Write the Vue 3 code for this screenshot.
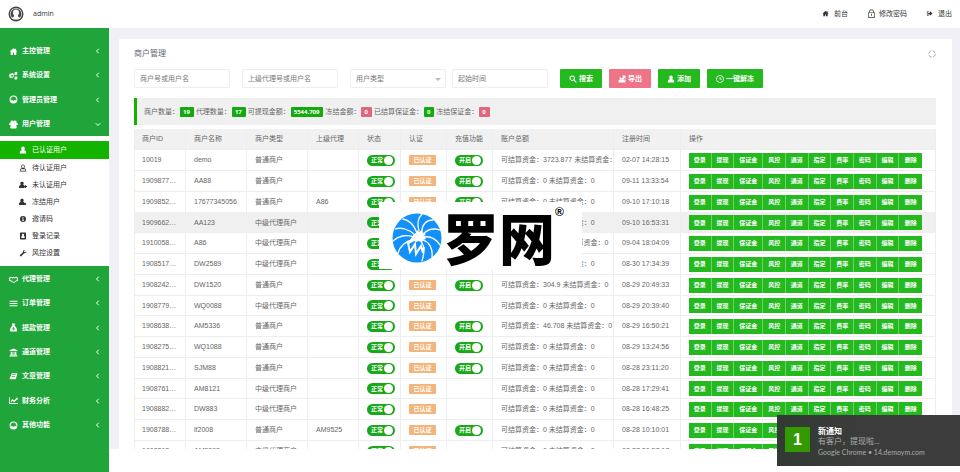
<script setup>
import { h } from 'vue'

const icons = {
  home: 'M8 2 1 8h2v6h4v-4h2v4h4V8h2L12.500 5.800V3h-2v1.100z',
  cogs: 'M5.500 3.500l1 .2.4 1.300 1.300-.3.800 1.300-1 1 .1 1 1.200.8-.5 1.400-1.500-.1-.7.800.2 1.500-1.500.5-.9-1.200-1 0-1 1.100-1.400-.7.4-1.400-.6-.8-1.300-.2V8l1.400-.4.4-1-.7-1.200 1.200-1.100 1.200.8 1-.4zM5.500 7a1.700 1.700 0 1 0 0 3.400 1.700 1.700 0 0 0 0-3.400zM12.500 1l1 1.200 1.500-.1v1.500l-1 .9 1 1-.4 1.300-1.500-.2-.9 1-1.200-1-1.500.1V5.200l1-.8-.9-1.200.8-1.100 1.300.3zM12.500 9l1 1.200 1.500-.1v1.500l-1 .9 1 1-.4 1.300-1.500-.2-.9 1-1.200-1-1.500.1v-1.500l1-.8-.9-1.200.8-1.100 1.300.3z',
  circle: 'M8 1a7 7 0 1 0 0 14A7 7 0 0 0 8 1zm0 1.800a5.200 5.200 0 0 1 4.700 7.400c-.6-.7-1.400-1-2.200-1.100A3.400 3.400 0 0 0 8 3.800a3.400 3.400 0 0 0-2.500 5.300c-.8.1-1.600.4-2.200 1.100A5.200 5.200 0 0 1 8 2.800zM8 4.200a2.900 2.900 0 1 1 0 5.800 2.900 2.900 0 0 1 0-5.800z',
  users: 'M5 1a2.400 2.400 0 0 1 3 1.500A2.400 2.400 0 0 1 11 1a2.500 2.500 0 0 1 2 3.500c2 .3 2.800 1.500 2.800 4.500h-3c.6 1 .8 2.500.8 5-1 1.300-10.200 1.300-11.200 0 0-2.500.2-4 .8-5h-3C.2 6 1 4.800 3 4.500A2.500 2.500 0 0 1 5 1z',
  user: 'M8 1c2.200 0 3.500 1.600 3.500 4 0 1.400-.5 2.600-1.300 3.400C13.500 9 14.500 11 14.500 15h-13c0-4 1-6 4.300-6.600C5 7.600 4.500 6.400 4.500 5c0-2.400 1.300-4 3.500-4z',
  userOutline: 'M8 1c2.200 0 3.500 1.600 3.500 4 0 1.400-.5 2.600-1.300 3.400C13.500 9 14.500 11 14.500 15h-13c0-4 1-6 4.300-6.600C5 7.600 4.500 6.400 4.500 5c0-2.400 1.300-4 3.500-4zm0 1.400C6.600 2.400 6 3.400 6 5c0 1.800 1 3 2 3s2-1.200 2-3c0-1.600-.6-2.600-2-2.600zM3 13.600h10c-.2-2.300-1.100-3.400-3-3.700-1.200.7-2.800.7-4 0-1.900.3-2.800 1.400-3 3.700z',
  userPlus: 'M6 1.500A3 3.300 0 0 1 7.800 7.700C10 8 11 9 11 10h1V8.500h2V10h2v2h-2v2h-2v-2h-1v2H0c0-4 1-5.900 4.200-6.300A3 3.300 0 0 1 6 1.500z',
  userTimes: 'M6 1.500A3 3.300 0 0 1 7.800 7.700c1.500.2 2.400.8 2.900 1.700L12 10.700l1.400-1.400 1.300 1.300-1.400 1.400 1.400 1.400-1.300 1.300-1.400-1.400L10.700 14H0c0-4 1-5.900 4.200-6.300A3 3.300 0 0 1 6 1.500z',
  info: 'M8 2a6 6 0 1 0 0 12A6 6 0 0 0 8 2zM7 4h2v2H7zm0 3h2v4h1v1H6v-1h1V8H6V7z',
  book: 'M3 1h10l1 1v12l-1 1H3l-1-1V2zm5 2.500a2.300 2.300 0 0 0-1.500 4C5 8 4.500 9.500 4.500 12h7c0-2.500-.5-4-2-4.500a2.300 2.300 0 0 0-1.500-4z',
  wrench: 'M14.500 4.500c.4 2.500-1.600 4.600-4.200 4.100L4.500 14.500c-1.500 1-3.500-1-2.500-2.500l6-5.600C7.400 3.500 9.600 1.300 12.300 2L9.900 4.300l.5 1.700 1.700.5z',
  handshake: 'M0 5l3-2 3 1 2-1 2 1 3-1 3 2v5l-3 1-4 3-3-1-3-2-3-1zm2 1v3l2 .5 3 2.300 2 .6 3-2.500 2-.7V6l-1.500-1L10 6 8 5 6 7.500 4.500 8 6.500 5.600 3.500 5z',
  list: 'M1 3h14v2H1zm0 4h14v2H1zm0 4h14v2H1z',
  bag: 'M5 1h6L9.800 4.500C13 7 15 11 14 15H2C1 11 3 7 6.200 4.500zM6.500 7l1 2H6v1h1.500v1H6v1h1.500v1.500h1V12H10v-1H8.500v-1H10V9H8.500l1-2h-1L8 8l-.5-1z',
  bank: 'M8 1l7 3v1.500H1V4zM3 6.500h2V12h1.200V6.500h1.300V12h1V6.500h1.300V12H11V6.500h2V12h1.500v1H1.500v-1H3zM1 13.500h14V15H1z',
  copy: 'M5 2h10l-3 11H3c-2 0-2-1-1.700-2zM6 4l-.4 1.400h6L12 4zM5 7l-.4 1.400h6L11 7z',
  chart: 'M0 2h1.500v10.500H16V14H0zm3 7l3.500-3.500 2.500 2.500L13 4l-1.200-1H15.500v4l-1.200-1L9 11 6.500 8.500 4 11z',
  search: 'M6.500 1a5.500 5.500 0 0 1 4.600 8.500L15.500 14 14 15.500l-4.500-4.400A5.500 5.500 0 1 1 6.500 1zm0 2a3.500 3.500 0 1 0 0 7 3.500 3.500 0 0 0 0-7z',
  share: 'M8 1h7v7l-2-2-3.500 3.500-2.500-2.500L10.500 3.500zM4.500 4L8 7.500 6 9h9v6H1V11l3-2C2.500 7 3 5 4.500 4z',
  clock: 'M8 .5a7.500 7.500 0 1 0 0 15 7.500 7.500 0 0 0 0-15zM8 2a6 6 0 1 1 0 12A6 6 0 0 1 8 2zM7.300 4v5H12V7.500H8.800V4z',
  lock: 'M2 6h2V4c0-4 8-4 8 0v2h2v9.500H2zm1.200 1.200v7h9.600v-7zM5.200 6h5.600V4c0-2.400-5.600-2.400-5.600 0zM7.300 8.500h1.400v3.500H7.300z',
  exit: 'M6 3v1.800H3.500v6.400H6V13H3.500L2 11.500v-7L3.500 3zm3 0l6 5-6 5v-3H5V6h4z',
}

const Icon = (props) =>
  h('svg', { viewBox: '0 0 16 16', 'aria-hidden': 'true' }, [
    h('path', { d: icons[props.name], fill: 'currentColor', 'fill-rule': 'evenodd' }),
  ])
Icon.props = ['name']

const topMenu = [
  { icon: 'home', label: '主控管理' },
  { icon: 'cogs', label: '系统设置' },
  { icon: 'circle', label: '管理员管理' },
  { icon: 'users', label: '用户管理', open: true },
]
const subMenu = [
  { icon: 'user', label: '已认证用户', active: true },
  { icon: 'userOutline', label: '待认证用户' },
  { icon: 'userPlus', label: '未认证用户' },
  { icon: 'userTimes', label: '冻结用户' },
  { icon: 'info', label: '邀请码' },
  { icon: 'book', label: '登录记录' },
  { icon: 'wrench', label: '风控设置' },
]
const bottomMenu = [
  { icon: 'handshake', label: '代理管理' },
  { icon: 'list', label: '订单管理' },
  { icon: 'bag', label: '提款管理' },
  { icon: 'bank', label: '通道管理' },
  { icon: 'copy', label: '文章管理' },
  { icon: 'chart', label: '财务分析' },
  { icon: 'circle', label: '其他功能' },
]
const stats = [
  { label: '商户数量：', value: '19' },
  { label: '代理数量：', value: '17' },
  { label: '可提现金额：', value: '5544.709' },
  { label: '冻结金额：', value: '0', red: true },
  { label: '已结算保证金：', value: '0' },
  { label: '冻结保证金：', value: '0', red: true },
]
const heads = ['商户ID', '商户名称', '商户类型', '上级代理', '状态', '认证', '充值功能', '账户总额', '注册时间', '操作']
const ops = ['登录', '提现', '保证金', '风控', '通道', '指定', '费率', '密码', '编辑', '删除']
const N = '普通商户'
const M = '中级代理商户'
const rows = [
  ['10019', 'demo', N, '', '3723.877', '02-07 14:28:15'],
  ['1909877345', 'AA88', N, '', '0', '09-11 13:33:54'],
  ['1909852345', '17677345056', N, 'A86', '0', '09-10 17:10:18'],
  ['1909662345', 'AA123', M, '', '0', '09-10 16:53:31'],
  ['1910058345', 'A86', M, '', '10.05', '09-04 18:04:09'],
  ['1908517345', 'DW2589', M, '', '0', '08-30 17:34:39'],
  ['1908242345', 'DW1520', N, '', '304.9', '08-29 20:49:33'],
  ['1908779345', 'WQ0088', M, '', '0', '08-29 20:39:40'],
  ['1908638345', 'AM5336', N, '', '46.708', '08-29 16:50:21'],
  ['1908275345', 'WQ1088', N, '', '0', '08-29 13:24:56'],
  ['1908821345', 'SJM88', N, '', '0', '08-28 23:11:20'],
  ['1908761345', 'AM8121', M, '', '0', '08-28 17:29:41'],
  ['1908882345', 'DW883', M, '', '0', '08-28 16:48:25'],
  ['1908788345', 'lf2008', N, 'AM9525', '0', '08-28 10:10:01'],
  ['1908818345', 'AM5565', M, '', '0', '08-27 20:57:17'],
]
</script>

<template>
  <div class="page">
    <header class="topbar">
      <svg class="avatar" viewBox="0 0 16 16" aria-hidden="true">
        <circle cx="8" cy="8" r="7.500" fill="#484848" />
        <circle cx="8" cy="8" r="6" fill="#fff" />
        <path fill="#484848" fill-rule="evenodd" d="M8 2.600a5.400 5.400 0 1 0 0 10.800A5.400 5.400 0 0 0 8 2.600zM8 3.500c2.200 0 3.200 1.500 3 3.500-.1 1.200-.6 2.100-1.200 2.700.1 1.100.6 1.200 2.200 1.900-2 2-6 2-8 0 1.600-.7 2.100-.8 2.200-1.900C5.600 9.100 5.100 8.200 5 7c-.2-2 .8-3.500 3-3.500z" />
      </svg>
      <span class="name">admin</span>
      <nav class="links">
        <a href="#"><Icon name="home" />前台</a>
        <a href="#" class="pwd"><Icon name="lock" />修改密码</a>
        <a href="#"><Icon name="exit" />退出</a>
      </nav>
    </header>

    <div class="body">
      <nav class="side">
        <ul class="group first">
          <li v-for="m in topMenu" :key="m.label">
            <a href="#"><Icon :name="m.icon" /><span>{{ m.label }}</span>
              <svg class="arrow" viewBox="0 0 8 8" aria-hidden="true"><path :d="m.open ? 'M1 3l3 3 3-3' : 'M5 1L2 4l3 3'" fill="none" stroke="currentColor" stroke-width="1.300" /></svg>
            </a>
          </li>
        </ul>
        <ul class="sub">
          <li v-for="m in subMenu" :key="m.label">
            <a href="#" :class="{ active: m.active }"><Icon :name="m.icon" /><span>{{ m.label }}</span></a>
          </li>
        </ul>
        <ul class="group last">
          <li v-for="m in bottomMenu" :key="m.label">
            <a href="#"><Icon :name="m.icon" /><span>{{ m.label }}</span>
              <svg class="arrow" viewBox="0 0 8 8" aria-hidden="true"><path d="M5 1L2 4l3 3" fill="none" stroke="currentColor" stroke-width="1.300" /></svg>
            </a>
          </li>
        </ul>
      </nav>

      <main class="main">
        <section class="card">
          <div class="title">
            <h1>商户管理</h1>
            <button class="refresh" aria-label="刷新">
              <svg viewBox="0 0 16 16"><circle cx="8" cy="8" r="6.500" fill="none" stroke="#999" stroke-width="1.500" stroke-dasharray="8 2.200" /></svg>
            </button>
          </div>

          <form class="filters" @submit.prevent>
            <input type="text" placeholder="商户号或用户名" aria-label="商户号或用户名" />
            <input type="text" placeholder="上级代理号或用户名" aria-label="上级代理号或用户名" />
            <div class="pair">
              <div class="pick">
                <select aria-label="用户类型"><option>用户类型</option></select>
              </div>
              <input type="text" placeholder="起始时间" aria-label="起始时间" />
            </div>
            <div class="btns">
              <button class="btn"><Icon name="search" />搜索</button>
              <button class="btn red" type="button"><Icon name="share" />导出</button>
              <button class="btn" type="button"><Icon name="user" />添加</button>
              <button class="btn" type="button"><Icon name="clock" />一键解冻</button>
            </div>
          </form>

          <div class="stats">
            <template v-for="s in stats" :key="s.label">{{ s.label }}<b :class="{ red: s.red }">{{ s.value }}</b></template>
          </div>

          <table>
            <colgroup>
              <col class="c-id" /><col class="c-name" /><col class="c-name" /><col class="c-up" /><col class="c-state" />
              <col class="c-auth" /><col class="c-auth" /><col class="c-sum" /><col class="c-time" /><col />
            </colgroup>
            <thead>
              <tr><th v-for="t in heads" :key="t">{{ t }}</th></tr>
            </thead>
            <tbody>
              <tr v-for="(r, i) in rows" :key="r[0]" :class="{ hover: i === 3 }">
                <td>{{ r[0] }}</td>
                <td>{{ r[1] }}</td>
                <td>{{ r[2] }}</td>
                <td>{{ r[3] }}</td>
                <td><label class="switch"><input type="checkbox" checked /><span>正常</span></label></td>
                <td><span class="tag">已认证</span></td>
                <td><label v-if="r[2] === N" class="switch"><input type="checkbox" checked /><span>开启</span></label></td>
                <td class="sum">可结算资金：{{ r[4] }} 未结算资金：0</td>
                <td>{{ r[5] }}</td>
                <td><div class="ops"><button v-for="o in ops" :key="o">{{ o }}</button></div></td>
              </tr>
            </tbody>
          </table>
        </section>
      </main>
    </div>

    <div class="brand">
      <svg viewBox="0 0 50 50" aria-hidden="true">
        <circle cx="25" cy="25" r="24.500" fill="#1490fb" />
        <g fill="none" stroke="#fff" stroke-width="1.300" stroke-linecap="round">
          <path d="M25 20C22 12 17 7 11 6" />
          <path d="M27 18C25 11 26 5 30 1" />
          <path d="M30 18c0-6 4-11 11-11" />
          <path d="M31 21c5-5 11-6 17-4" />
          <path d="M32 24c6-1 12 2 16 8" />
          <path d="M31 27c6 2 10 8 9 17" />
          <path d="M29 28c4 6 3 14 1 20" />
          <path d="M23 22C17 16 9 14 3 16" />
          <path d="M22 24C14 21 6 23 1 28" />
          <path d="M20 27C14 28 8 33 6 40" />
        </g>
        <path fill="#fff" d="M22 21l2-1 1-3 2 2 3-2 1 3 3 1-2 2 2 3-3 1-1 3-3-2-3 1-3-2-3 0 2-3z" />
        <path fill="none" stroke="#fff" stroke-width="2" stroke-linejoin="miter" d="M24 26l-8 4 2 9 5-8 1 10 5-8 2 7 1-6" />
      </svg>
      <span class="word">罗网</span><sup>®</sup>
    </div>

    <aside class="toast">
      <div class="num">1</div>
      <div>
        <strong>新通知</strong>
        <p>有客户，提现啦...</p>
        <small>Google Chrome • 14.demoym.com</small>
      </div>
    </aside>
  </div>
</template>

<style>
body {
  margin: 0;
  background: #fff;
}
</style>

<style scoped>
* {
  box-sizing: border-box;
}
.page {
  position: relative;
  display: flex;
  flex-direction: column;
  height: 100vh;
  overflow: hidden;
  font: 7px/10px "Liberation Sans", "Noto Sans CJK SC", sans-serif;
  color: #666;
}
a {
  color: inherit;
  text-decoration: none;
}
ul {
  list-style: none;
  margin: 0;
  padding: 0;
}
button,
input,
select {
  font: inherit;
  margin: 0;
}
svg {
  display: block;
  flex: none;
}
.topbar {
  display: flex;
  align-items: center;
  height: 28px;
  padding: 0 8px 1px;
  flex: none;
  color: #333;
}
.avatar {
  width: 16px;
  height: 16px;
}
.name {
  margin-left: 9px;
  font-family: "Open Sans", sans-serif;
}
.links {
  display: flex;
  gap: 19px;
  margin-left: auto;
}
.links a {
  display: flex;
  align-items: center;
  gap: 5px;
}
.links svg {
  width: 7px;
  height: 7px;
}
.links .pwd {
  gap: 3px;
}
.links .pwd svg {
  width: 9px;
  height: 9px;
}
.body {
  display: flex;
  flex: 1;
  min-height: 0;
}
.side {
  display: flex;
  flex-direction: column;
  width: 109px;
  flex: none;
}
.group {
  background: #20a53a;
  color: #fff;
  font-weight: 700;
}
.first {
  padding: 11px 0 0;
}
.last {
  flex: 1;
  padding-top: 1px;
}
.group a {
  display: flex;
  align-items: center;
  gap: 4px;
  height: 24px;
  padding: 0 8px 0 9px;
}
.group li:nth-child(3n) a {
  height: 25px;
}
.group a svg {
  width: 9px;
  height: 9px;
}
.group a .arrow {
  width: 6px;
  height: 6px;
  margin-left: auto;
}
.sub {
  padding: 5px 0 5px;
  color: #333;
}
.sub a {
  display: flex;
  align-items: center;
  gap: 5px;
  height: 17px;
  padding-left: 19px;
}
.sub svg {
  width: 8px;
  height: 8px;
}
.sub .active {
  height: 18px;
  background: #13b300;
  color: #fff;
}
.main {
  display: flex;
  flex: 1;
  min-width: 0;
  margin-bottom: 23px;
  padding: 11px 8px 0 10px;
  background: #f0f0f6;
}
.card {
  flex: 1;
  min-width: 0;
  padding: 9px 16px 0 15px;
  overflow: hidden;
  background: #fff;
}
.title {
  display: flex;
  align-items: center;
  justify-content: space-between;
  height: 12px;
}
h1 {
  margin: 0;
  font-size: 8px;
  font-weight: 400;
  color: #667;
}
.refresh {
  padding: 0;
  border: 0;
  background: none;
}
.refresh svg {
  width: 8px;
  height: 8px;
}
.filters {
  display: flex;
  gap: 12px;
  margin: 9px 0 10px;
}
.filters input,
.filters select {
  width: 96px;
  height: 19px;
  padding: 0 5px;
  border: 1px solid #eee;
  border-radius: 1px;
  background: #fff;
  color: #777;
}
.filters input::placeholder {
  color: #777;
  opacity: 1;
}
.filters select {
  display: block;
  appearance: none;
}
.pair {
  display: flex;
  gap: 6px;
}
.pick {
  position: relative;
}
.pick::after {
  content: "";
  position: absolute;
  right: 5px;
  top: 9px;
  border: 3px solid transparent;
  border-top-color: #bbb;
  pointer-events: none;
}
.btns {
  display: flex;
  gap: 7px;
}
.btn {
  display: flex;
  align-items: center;
  gap: 2px;
  height: 19px;
  padding: 0 9px;
  border: 0;
  border-radius: 1px;
  background: #24b91f;
  color: #fff;
  font-weight: 700;
}
.btn svg {
  width: 8px;
  height: 8px;
}
.btn.red {
  background: #ee7588;
}
.stats {
  padding: 8px 7px;
  border-left: 3px solid #13b300;
  background: #f0f0f0;
  line-height: 11px;
  white-space: nowrap;
}
.stats b {
  display: inline-block;
  height: 10px;
  margin: 0 2px 0 1px;
  padding: 0 4px 0 3px;
  border-radius: 1px;
  background: #13a90f;
  color: #fff;
  font: bold 6px/10px "Open Sans", sans-serif;
}
.stats b.red {
  background: #e0677a;
}
table {
  width: 100%;
  margin-top: 4px;
  table-layout: fixed;
  border-collapse: separate;
  border-spacing: 0;
}
.c-id {
  width: 52px;
}
.c-name {
  width: 61px;
}
.c-up {
  width: 51px;
}
.c-state {
  width: 42px;
}
.c-auth {
  width: 46px;
}
.c-sum {
  width: 121px;
}
.c-time {
  width: 67px;
}
th,
td {
  height: 21px;
  padding: 0 0 0 8px;
  border-right: 1px solid #eee;
  border-bottom: 1px solid #eee;
  overflow: hidden;
  text-align: left;
  text-overflow: ellipsis;
  white-space: nowrap;
  font-weight: 400;
}
th:first-child,
td:first-child {
  padding-left: 7px;
  border-left: 1px solid #eee;
}
th {
  background: #f1f1f1;
}
tbody tr:nth-child(4n) td {
  height: 20px;
}
td:first-child {
  padding-right: 8px;
}
td.sum {
  text-overflow: clip;
}
.hover td {
  background: #f0f0f0;
}
.switch {
  position: relative;
  display: flex;
  align-items: center;
  width: 28px;
  height: 11px;
  padding-left: 4px;
  border-radius: 6px;
  background: #18a818;
  color: #fff;
  font-size: 6px;
  font-weight: 700;
}
.switch input {
  position: absolute;
  inset: 0;
  opacity: 0;
}
.switch::after {
  content: "";
  width: 9px;
  height: 9px;
  margin: 0 2px 0 auto;
  border-radius: 50%;
  background: #fff;
}
.tag {
  display: block;
  width: 27px;
  border-radius: 1px;
  background: #f4b57c;
  color: #fff;
  font-size: 6px;
  font-weight: 700;
  text-align: center;
}
.ops {
  display: grid;
  grid-template-columns: 1fr 1fr 29px repeat(7, 1fr);
  width: 233px;
}
.ops button {
  height: 15px;
  padding: 0;
  border: 0;
  border-right: 1px solid #6fd06c;
  background: #24b91f;
  color: #fff;
  font-size: 6px;
  font-weight: 700;
}
.ops button:last-child {
  border-right: 0;
}
.brand {
  position: absolute;
  left: 379px;
  top: 202px;
  display: flex;
  align-items: center;
  width: 203px;
  height: 67px;
  padding-left: 13px;
  background: #fff;
  color: #000;
}
.brand svg {
  width: 50px;
  height: 50px;
  margin-top: 4px;
}
.word {
  font: 900 56px/66px "Noto Sans CJK SC", sans-serif;
  margin-left: 1px;
}
.brand sup {
  align-self: flex-start;
  margin-top: 2px;
  font-size: 12px;
  font-weight: 700;
  line-height: 16px;
}
.toast {
  position: absolute;
  right: 0;
  bottom: 6px;
  display: flex;
  gap: 8px;
  width: 183px;
  height: 51px;
  padding: 10px 8px;
  background: linear-gradient(90deg, #323a33, #3c3c3c 50%);
  color: #aaa;
  font-family: "Open Sans", "Noto Sans CJK SC", sans-serif;
}
.num {
  width: 25px;
  height: 25px;
  margin-top: 2px;
  background: #390;
  color: #fff;
  font: bold 16px/25px "Liberation Sans", sans-serif;
  text-align: center;
}
.toast strong,
.toast p,
.toast small {
  display: block;
  margin: 0;
  font-size: 8px;
  line-height: 11px;
}
.toast p {
  font-family: Lato, "Noto Sans CJK SC", sans-serif;
}
.toast strong {
  color: #fff;
}
.toast small {
  font-family: Lato, sans-serif;
  font-size: 7px;
}
</style>
